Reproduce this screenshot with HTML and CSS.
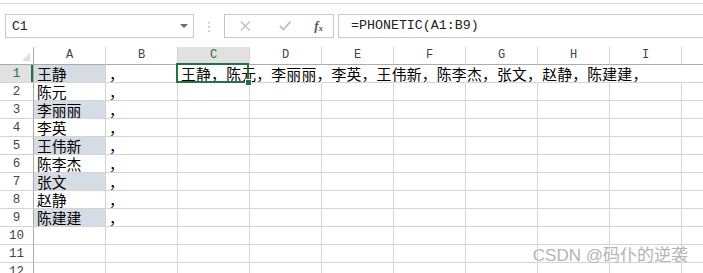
FILE: index.html
```html
<!DOCTYPE html>
<html lang="zh-CN">
<head>
    <meta charset="UTF-8">
    <title>PHONETIC</title>
    <link rel="stylesheet" href="styles.css">
</head>
<body>
    <div class="top-rule"></div>

    <!-- Name box + formula bar -->
    <div class="formula-row">
        <div class="name-box">
            <span>C1</span>
            <span class="caret"></span>
        </div>
        <div class="grip">⋮</div>
        <div class="fx-buttons">
            <svg class="ico" width="12" height="12" viewBox="0 0 12 12"><path d="M1 1 L11 11 M11 1 L1 11" stroke="#bdbdbd" stroke-width="1.4" fill="none"/></svg>
            <svg class="ico" width="14" height="12" viewBox="0 0 14 12"><path d="M1 6 L5 10 L13 1" stroke="#bdbdbd" stroke-width="2" fill="none"/></svg>
            <span class="fx">f<sub>x</sub></span>
        </div>
        <div class="formula">=PHONETIC(A1:B9)</div>
    </div>

    <!-- Sheet -->
    <div class="sheet">
        <div class="corner"><span class="tri"></span></div>
        <div class="ch">A</div><div class="ch">B</div><div class="ch cur">C</div><div class="ch">D</div><div class="ch">E</div>
        <div class="ch">F</div><div class="ch">G</div><div class="ch">H</div><div class="ch">I</div><div class="ch"></div>

        <div class="rh cur">1</div><div class="c a">王静</div><div class="c">，</div>
        <div class="c active">王静，陈元，李丽丽，李英，王伟新，陈李杰，张文，赵静，陈建建，</div>
        <div class="c spill"></div><div class="c spill"></div><div class="c spill"></div><div class="c spill"></div><div class="c spill"></div><div class="c spill"></div><div class="c"></div>

        <div class="rh">2</div><div class="c">陈元</div><div class="c">，</div>
        <div class="c"></div><div class="c"></div><div class="c"></div><div class="c"></div><div class="c"></div><div class="c"></div><div class="c"></div><div class="c"></div>

        <div class="rh">3</div><div class="c a">李丽丽</div><div class="c">，</div>
        <div class="c"></div><div class="c"></div><div class="c"></div><div class="c"></div><div class="c"></div><div class="c"></div><div class="c"></div><div class="c"></div>

        <div class="rh">4</div><div class="c">李英</div><div class="c">，</div>
        <div class="c"></div><div class="c"></div><div class="c"></div><div class="c"></div><div class="c"></div><div class="c"></div><div class="c"></div><div class="c"></div>

        <div class="rh">5</div><div class="c a">王伟新</div><div class="c">，</div>
        <div class="c"></div><div class="c"></div><div class="c"></div><div class="c"></div><div class="c"></div><div class="c"></div><div class="c"></div><div class="c"></div>

        <div class="rh">6</div><div class="c">陈李杰</div><div class="c">，</div>
        <div class="c"></div><div class="c"></div><div class="c"></div><div class="c"></div><div class="c"></div><div class="c"></div><div class="c"></div><div class="c"></div>

        <div class="rh">7</div><div class="c a">张文</div><div class="c">，</div>
        <div class="c"></div><div class="c"></div><div class="c"></div><div class="c"></div><div class="c"></div><div class="c"></div><div class="c"></div><div class="c"></div>

        <div class="rh">8</div><div class="c">赵静</div><div class="c">，</div>
        <div class="c"></div><div class="c"></div><div class="c"></div><div class="c"></div><div class="c"></div><div class="c"></div><div class="c"></div><div class="c"></div>

        <div class="rh">9</div><div class="c a">陈建建</div><div class="c">，</div>
        <div class="c"></div><div class="c"></div><div class="c"></div><div class="c"></div><div class="c"></div><div class="c"></div><div class="c"></div><div class="c"></div>

        <div class="rh">10</div>
        <div class="c"></div><div class="c"></div><div class="c"></div><div class="c"></div><div class="c"></div><div class="c"></div><div class="c"></div><div class="c"></div><div class="c"></div><div class="c"></div>

        <div class="rh">11</div>
        <div class="c"></div><div class="c"></div><div class="c"></div><div class="c"></div><div class="c"></div><div class="c"></div><div class="c"></div><div class="c"></div><div class="c"></div><div class="c"></div>

        <div class="rh">12</div>
        <div class="c"></div><div class="c"></div><div class="c"></div><div class="c"></div><div class="c"></div><div class="c"></div><div class="c"></div><div class="c"></div><div class="c"></div><div class="c"></div>
    </div>

    <div class="watermark">CSDN @码仆的逆袭</div>
</body>
</html>
```

FILE: styles.css
```css
body {
    margin: 0;
    width: 703px;
    height: 273px;
    overflow: hidden;
    position: relative;
    background: #fff;
    font-family: "Liberation Mono", monospace;
    color: #000;
}
.top-rule {
    height: 3px;
    border-bottom: 1px solid #d9d9d9;
}

/* formula bar */
.formula-row {
    display: flex;
    align-items: center;
    margin: 10px 0 9px 5px;
    height: 24px;
}
.name-box {
    box-sizing: border-box;
    width: 189px;
    height: 24px;
    border: 1px solid #c6c6c6;
    display: flex;
    align-items: center;
    justify-content: space-between;
    padding: 0 5px 0 6px;
    font-size: 13px;
    color: #222;
}
.caret {
    width: 0;
    height: 0;
    border-left: 4px solid transparent;
    border-right: 4px solid transparent;
    border-top: 4px solid #6a6a6a;
}
.grip {
    width: 30px;
    text-align: center;
    color: #b0b0b0;
    font-family: "DejaVu Sans", sans-serif;
    font-size: 13px;
}
.fx-buttons {
    box-sizing: border-box;
    width: 110px;
    height: 24px;
    border: 1px solid #c6c6c6;
    display: flex;
    align-items: center;
    padding: 0 10px 0 15px;
    gap: 28px;
}
.fx {
    font-family: "Liberation Serif", serif;
    font-style: italic;
    font-weight: bold;
    font-size: 13px;
    color: #555;
    margin-left: -5px;
}
.fx sub {
    font-size: 9px;
    vertical-align: -1px;
}
.formula {
    box-sizing: border-box;
    flex: 1;
    height: 24px;
    margin-left: 4px;
    border: 1px solid #c6c6c6;
    border-right: none;
    padding: 0 0 0 12px;
    line-height: 22px;
    font-size: 13.3px;
    color: #222;
}

/* sheet grid */
.sheet {
    display: grid;
    grid-template-columns: 34px repeat(10, 72px);
    grid-template-rows: 18px;
    grid-auto-rows: 18px;
}
.sheet > div {
    box-sizing: border-box;
    border-right: 1px solid #d4d4d4;
    border-bottom: 1px solid #d4d4d4;
}
.corner {
    position: relative;
    border-bottom-color: #ababab !important;
    border-right-color: #ababab !important;
}
.tri {
    position: absolute;
    right: 3px;
    bottom: 3px;
    width: 0;
    height: 0;
    border-left: 8px solid transparent;
    border-bottom: 8px solid #dedede;
}
.ch {
    text-align: center;
    font-size: 12px;
    line-height: 17px;
    color: #444;
    border-bottom-color: #ababab !important;
}
.rh {
    text-align: center;
    font-size: 12.5px;
    line-height: 18px;
    color: #444;
    border-right-color: #ababab !important;
}
.ch.cur, .rh.cur {
    background: #e1e1e1;
    color: #217346;
}
.rh.cur {
    box-shadow: inset -2px 0 0 #217346;
}
.c {
    font-family: "Noto Sans CJK SC", sans-serif;
    font-size: 14.8px;
    line-height: 17px;
    padding-left: 3px;
    white-space: nowrap;
}
.c.a {
    background: #d6dce4;
}
.c.spill {
    border-right-color: transparent !important;
}
.c.active {
    position: relative;
    letter-spacing: 0.25px;
    border-right-color: transparent !important;
}
.c.active::after {
    content: "";
    position: absolute;
    left: -2px;
    top: -2px;
    width: 73px;
    height: 20px;
    border: 2px solid #217346;
    box-sizing: border-box;
}
.c.active::before {
    content: "";
    position: absolute;
    left: 67px;
    top: 14px;
    width: 5px;
    height: 5px;
    background: #217346;
    border: 1px solid #fff;
    z-index: 1;
}

.watermark {
    position: absolute;
    right: 15px;
    bottom: 7px;
    font-family: "Liberation Sans", "Noto Sans CJK SC", sans-serif;
    font-size: 17px;
    line-height: 20px;
    color: #b4b4b4;
    text-shadow: 0 0 1px #fff, 0 0 2px #fff;
}
```
